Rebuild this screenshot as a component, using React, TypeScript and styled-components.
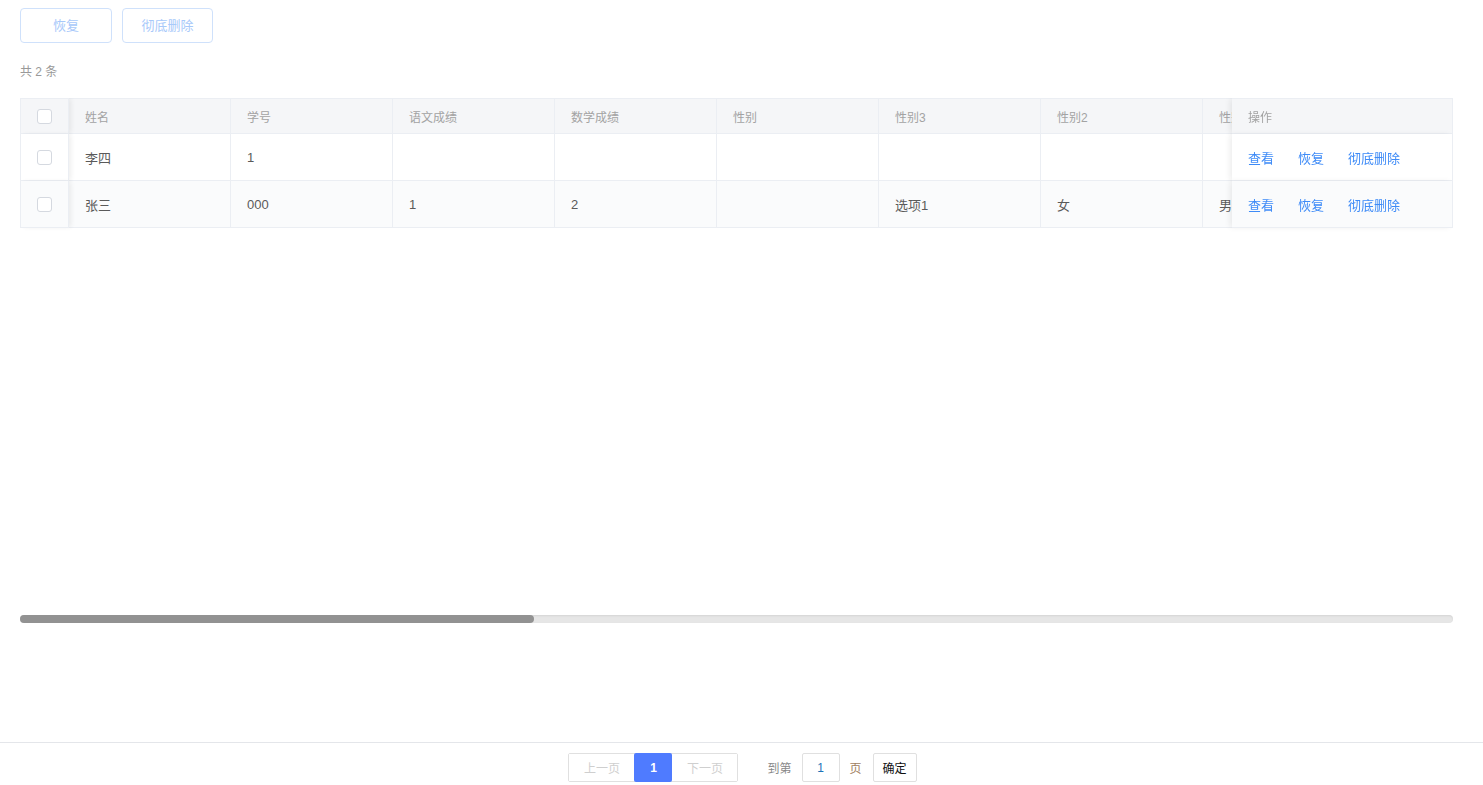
import styled, { createGlobalStyle } from 'styled-components'

const GlobalStyle = createGlobalStyle`
	html, body {
		margin: 0;
		padding: 0;
		background: #fff;
		font-family: 'Liberation Sans', 'Noto Sans CJK SC', sans-serif;
	}
	* {
		box-sizing: border-box;
	}
`

const Page = styled.div`
	height: 100vh;
	display: flex;
	flex-direction: column;
	overflow: hidden;
`

const Main = styled.main`
	flex: 1;
	min-width: 0;
	padding: 8px 30px 0 20px;
	display: flex;
	flex-direction: column;
`

const Toolbar = styled.div`
	display: flex;
	gap: 10px;
`

const ToolButton = styled.button<{ $width: number }>`
	width: ${p => p.$width}px;
	height: 35px;
	border: 1px solid #cfe1fb;
	border-radius: 4px;
	background: #fff;
	color: #a8c9fa;
	font-family: inherit;
	font-size: 13px;
	padding: 0 0 2px;
`

const Count = styled.div`
	margin-top: 19px;
	height: 20px;
	line-height: 20px;
	font-size: 12px;
	color: #999;
`

const TableFrame = styled.div`
	margin-top: 16px;
	height: 525px;
	display: flex;
	flex-direction: column;
`

const ScrollArea = styled.div`
	flex: 1;
	min-width: 0;
	overflow: hidden;
`

const ScrollTrack = styled.div`
	height: 8px;
	flex-shrink: 0;
	border-radius: 4px;
	background: #e6e6e6;
	box-shadow: inset 0 1px 2px rgba(0, 0, 0, 0.08);
	display: flex;
`

const ScrollThumb = styled.div`
	height: 100%;
	border-radius: 4px;
	background: #929292;
`

const Table = styled.table<{ $width: number }>`
	width: ${p => p.$width}px;
	min-width: ${p => p.$width}px;
	border-collapse: separate;
	border-spacing: 0;
	table-layout: fixed;
`

const HeadCell = styled.th<{ $width: number }>`
	width: ${p => p.$width}px;
	height: 36px;
	padding: 0 16px;
	background: #f5f6f8;
	border-top: 1px solid #ebeef3;
	border-bottom: 1px solid #ebeef3;
	border-right: 1px solid #ebeef3;
	font-size: 12px;
	font-weight: normal;
	color: #a3a3a3;
	text-align: left;
	white-space: nowrap;
	overflow: hidden;
`

const Row = styled.tr<{ $striped: boolean }>`
	background: ${p => (p.$striped ? '#fafbfc' : '#fff')};
`

const Cell = styled.td`
	height: 47px;
	padding: 0 16px;
	border-bottom: 1px solid #ebeef3;
	border-right: 1px solid #ebeef3;
	font-size: 13px;
	color: #5a5a5a;
	white-space: nowrap;
	overflow: hidden;
	background: inherit;
`

const CheckHead = styled(HeadCell)`
	position: sticky;
	left: 0;
	z-index: 2;
	padding: 0;
	text-align: center;
	border-left: 1px solid #ebeef3;
	box-shadow: 3px 0 5px -1px rgba(0, 0, 0, 0.07);
`

const CheckCell = styled(Cell)`
	position: sticky;
	left: 0;
	z-index: 2;
	padding: 0;
	text-align: center;
	border-left: 1px solid #ebeef3;
	box-shadow: 3px 0 5px -1px rgba(0, 0, 0, 0.07);
`

const ActionHead = styled(HeadCell)`
	position: sticky;
	right: 0;
	z-index: 2;
	box-shadow: -3px 0 6px -1px rgba(0, 0, 0, 0.08);
`

const ActionCell = styled(Cell)`
	position: sticky;
	right: 0;
	z-index: 2;
	box-shadow: -3px 0 6px -1px rgba(0, 0, 0, 0.08);
`

const Actions = styled.div`
	display: flex;
	gap: 24px;
`

const ActionLink = styled.a`
	color: #3e8bf7;
	font-size: 13px;
	text-decoration: none;
	cursor: pointer;
`

const Checkbox = styled.span`
	display: inline-block;
	width: 15px;
	height: 15px;
	border: 1px solid #d5d9e0;
	border-radius: 3px;
	background: #fff;
	vertical-align: middle;
`

const Footer = styled.footer`
	height: 43px;
	flex-shrink: 0;
	border-top: 1px solid #e4e6ea;
	display: flex;
	justify-content: center;
	align-items: flex-start;
	padding: 10px 0 0 2px;
	font-size: 12px;
`

const Pager = styled.div`
	display: flex;
	height: 29px;
	border: 1px solid #e0e0e0;
	border-radius: 2px;
`

const PageButton = styled.div<{ $width: number; $active?: boolean }>`
	width: ${p => p.$width}px;
	display: flex;
	align-items: center;
	justify-content: center;
	color: ${p => (p.$active ? '#fff' : '#cfcfcf')};
	background: ${p => (p.$active ? '#4f7bff' : '#fff')};
	border-radius: ${p => (p.$active ? '2px' : '0')};
	margin: ${p => (p.$active ? '-1px 0' : '0')};
	font-weight: ${p => (p.$active ? 'bold' : 'normal')};
`

const Jump = styled.div`
	display: flex;
	align-items: center;
	height: 29px;
	margin-left: 29px;
	color: #888;
`

const PageInput = styled.div`
	width: 38px;
	height: 29px;
	margin: 0 10px;
	border: 1px solid #e0e0e0;
	border-radius: 2px;
	display: flex;
	align-items: center;
	justify-content: center;
	color: #1d73b8;
`

const PageUnit = styled.span`
	color: #a08060;
`

const ConfirmButton = styled.div`
	width: 44px;
	height: 29px;
	margin-left: 11px;
	border: 1px solid #e0e0e0;
	border-radius: 2px;
	display: flex;
	align-items: center;
	justify-content: center;
	color: #111;
`

const fields = ['姓名', '学号', '语文成绩', '数学成绩', '性别', '性别3', '性别2', '性别1']

const rows = [
	{ id: 1, values: ['李四', '1'] },
	{ id: 2, values: ['张三', '000', '1', '2', '', '选项1', '女', '男'] },
]

const colWidth = 162
const checkWidth = 49
const actionWidth = 221
const tableWidth = checkWidth + fields.length * colWidth + actionWidth
// visible share of the scrolled table, as the scrollbar shows it
const thumbShare = 35.9

const App = () => {
	return (
		<Page>
			<GlobalStyle />
			<Main>
				<Toolbar>
					<ToolButton $width={92}>恢复</ToolButton>
					<ToolButton $width={91}>彻底删除</ToolButton>
				</Toolbar>
				<Count>共 2 条</Count>
				<TableFrame>
					<ScrollArea>
						<Table $width={tableWidth}>
							<thead>
								<tr>
									<CheckHead $width={checkWidth}>
										<Checkbox />
									</CheckHead>
									{fields.map(f => (
										<HeadCell key={f} $width={colWidth}>
											{f}
										</HeadCell>
									))}
									<ActionHead $width={actionWidth}>操作</ActionHead>
								</tr>
							</thead>
							<tbody>
								{rows.map((row, i) => (
									<Row key={row.id} $striped={i % 2 === 1}>
										<CheckCell>
											<Checkbox />
										</CheckCell>
										{fields.map((f, j) => (
											<Cell key={f}>{row.values[j] ?? ''}</Cell>
										))}
										<ActionCell>
											<Actions>
												<ActionLink>查看</ActionLink>
												<ActionLink>恢复</ActionLink>
												<ActionLink>彻底删除</ActionLink>
											</Actions>
										</ActionCell>
									</Row>
								))}
							</tbody>
						</Table>
					</ScrollArea>
					<ScrollTrack>
						<ScrollThumb style={{ width: `${thumbShare}%` }} />
					</ScrollTrack>
				</TableFrame>
			</Main>
			<Footer>
				<Pager>
					<PageButton $width={65}>上一页</PageButton>
					<PageButton $width={38} $active>
						1
					</PageButton>
					<PageButton $width={65}>下一页</PageButton>
				</Pager>
				<Jump>
					到第
					<PageInput>1</PageInput>
					<PageUnit>页</PageUnit>
					<ConfirmButton>确定</ConfirmButton>
				</Jump>
			</Footer>
		</Page>
	)
}

export default App
